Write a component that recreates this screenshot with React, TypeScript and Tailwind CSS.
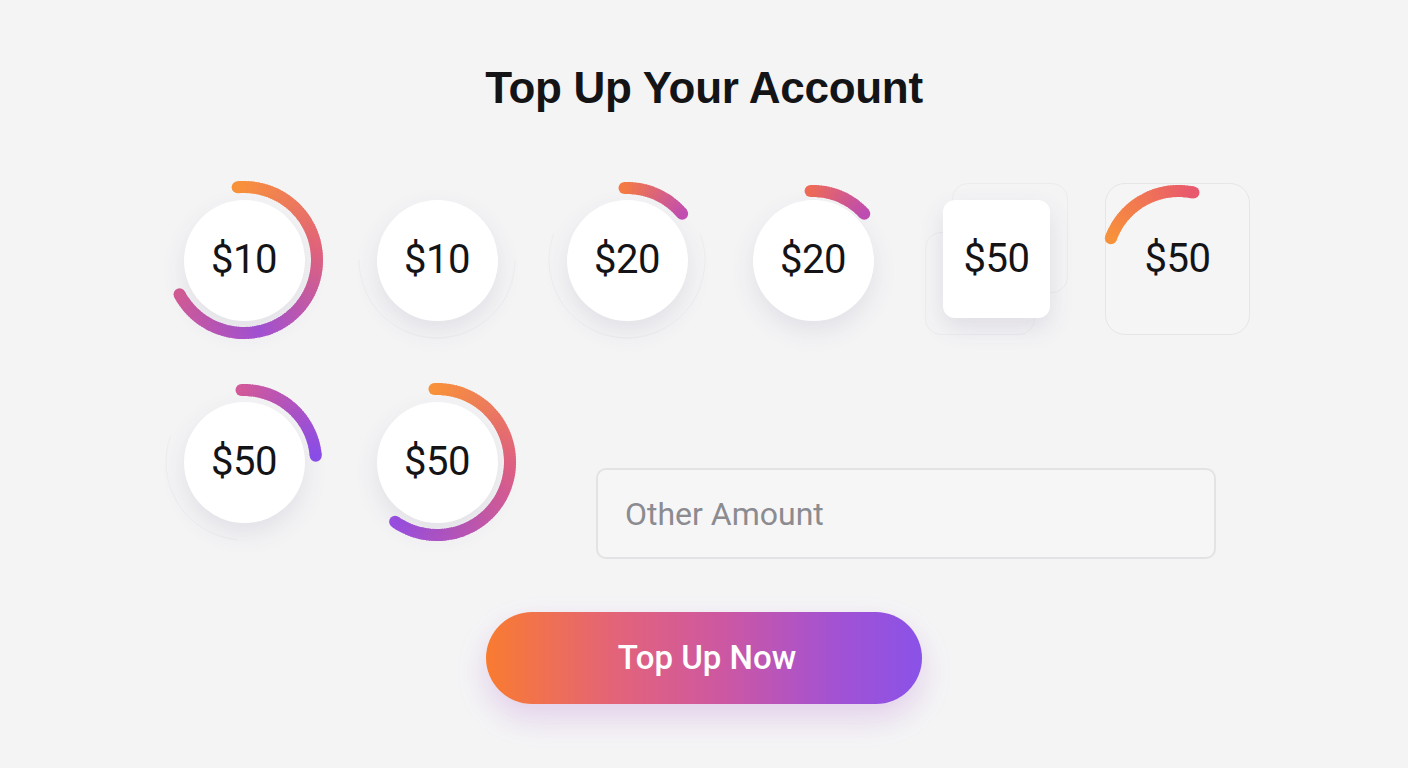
import React from "react";

type Stop = [number, string];

function hexToRgb(h: string): [number, number, number] {
  const v = h.replace("#", "");
  return [parseInt(v.slice(0, 2), 16), parseInt(v.slice(2, 4), 16), parseInt(v.slice(4, 6), 16)];
}

function colorAt(stops: Stop[], t: number): string {
  if (t <= stops[0][0]) return stops[0][1];
  for (let i = 0; i < stops.length - 1; i++) {
    const [t0, c0] = stops[i];
    const [t1, c1] = stops[i + 1];
    if (t >= t0 && t <= t1) {
      const k = (t - t0) / (t1 - t0 || 1);
      const a = hexToRgb(c0);
      const b = hexToRgb(c1);
      const m = a.map((x, j) => Math.round(x + (b[j] - x) * k));
      return `rgb(${m[0]},${m[1]},${m[2]})`;
    }
  }
  return stops[stops.length - 1][1];
}

function pt(cx: number, cy: number, r: number, a: number) {
  const rad = (a * Math.PI) / 180;
  return [cx + r * Math.cos(rad), cy + r * Math.sin(rad)];
}

function GradArc({
  cx = 80,
  cy = 80,
  r = 72,
  start,
  end,
  stops,
  width = 12,
}: {
  cx?: number;
  cy?: number;
  r?: number;
  start: number;
  end: number;
  stops: Stop[];
  width?: number;
}) {
  const n = Math.max(4, Math.ceil((end - start) / 2));
  const segs = [];
  for (let i = 0; i < n; i++) {
    const a0 = start + ((end - start) * i) / n;
    const a1 = Math.min(end, start + ((end - start) * (i + 1)) / n + 0.8);
    const [x0, y0] = pt(cx, cy, r, a0);
    const [x1, y1] = pt(cx, cy, r, a1);
    segs.push(
      <path
        key={i}
        d={`M ${x0} ${y0} A ${r} ${r} 0 0 1 ${x1} ${y1}`}
        stroke={colorAt(stops, (i + 0.5) / n)}
        strokeWidth={width}
        fill="none"
        strokeLinecap="butt"
      />
    );
  }
  const [sx, sy] = pt(cx, cy, r, start);
  const [ex, ey] = pt(cx, cy, r, end);
  return (
    <g>
      <circle cx={sx} cy={sy} r={width / 2} fill={colorAt(stops, 0)} />
      <circle cx={ex} cy={ey} r={width / 2} fill={colorAt(stops, 1)} />
      {segs}
    </g>
  );
}

function FaintArc({ start, end, r = 78 }: { start: number; end: number; r?: number }) {
  const [x0, y0] = pt(80, 80, r, start);
  const [x1, y1] = pt(80, 80, r, end);
  const large = end - start > 180 ? 1 : 0;
  return (
    <path
      d={`M ${x0} ${y0} A ${r} ${r} 0 ${large} 1 ${x1} ${y1}`}
      stroke="#ededf0"
      strokeWidth={1}
      fill="none"
    />
  );
}

function CircleItem({
  label,
  children,
  className = "",
}: {
  label: string;
  children?: React.ReactNode;
  className?: string;
}) {
  return (
    <div className={`relative w-[160px] h-[160px] shrink-0 flex items-center justify-center ${className}`}>
      <svg className="absolute inset-0 overflow-visible" width={160} height={160} viewBox="0 0 160 160">
        {children}
      </svg>
      <div className="relative w-[121px] h-[121px] rounded-full bg-white shadow-[0_10px_24px_rgba(70,60,110,0.10)] flex items-center justify-center">
        <span className="text-[40px] leading-none text-[#141416] font-['Roboto',sans-serif] tracking-[-0.5px]">
          {label}
        </span>
      </div>
    </div>
  );
}

export default function App() {
  return (
    <div className="w-[1408px] h-[768px] bg-[#f4f4f5] overflow-hidden font-['Roboto',sans-serif]">
      <h1 className="pt-[63px] text-center text-[44px] leading-[50px] font-bold text-[#141416] font-['Liberation_Sans',Arial,sans-serif] tracking-[-0.3px]">
        Top Up Your Account
      </h1>

      <div className="mt-[67px] pl-[164px] flex items-start">
        <CircleItem label="$10">
          <GradArc
            start={-95}
            end={152}
            r={73}
            stops={[
              [0, "#f8923a"],
              [0.35, "#e2647c"],
              [0.7, "#a552d6"],
              [1, "#d35c95"],
            ]}
          />
        </CircleItem>
        <CircleItem label="$10" className="ml-[33px]">
          <FaintArc start={0} end={180} />
        </CircleItem>
        <CircleItem label="$20" className="ml-[30px]">
          <FaintArc start={-20} end={200} />
          <GradArc
            start={-92}
            end={-40}
            stops={[
              [0, "#f47a44"],
              [1, "#c24fb1"],
            ]}
          />
        </CircleItem>
        <CircleItem label="$20" className="ml-[26px]">
          <GradArc
            start={-92}
            end={-42}
            r={69}
            stops={[
              [0, "#ee6b58"],
              [1, "#bf4db3"],
            ]}
          />
        </CircleItem>

        <div className="relative w-[160px] h-[160px] shrink-0 ml-[23px]">
          <div className="absolute left-[36px] top-[3px] w-[116px] h-[110px] rounded-[16px] border border-[#ececef]" />
          <div className="absolute left-[9px] top-[52px] w-[110px] h-[103px] rounded-[16px] border border-[#ececef]" />
          <div className="absolute left-[27px] top-[20px] w-[107px] h-[118px] rounded-[12px] bg-white shadow-[0_10px_24px_rgba(70,60,110,0.12)] flex items-center justify-center">
            <span className="text-[40px] leading-none text-[#141416] tracking-[-0.5px]">$50</span>
          </div>
        </div>

        <div className="relative w-[145px] h-[152px] shrink-0 ml-[29px] mt-[3px] rounded-[20px] border border-[#e6e6e9] bg-[#f5f5f6] flex items-center justify-center">
          <svg className="absolute left-0 top-0 overflow-visible" width={145} height={152} viewBox="0 0 145 152">
            <GradArc
              cx={72.5}
              cy={79}
              r={72}
              start={-160}
              end={-78}
              stops={[
                [0, "#f8923a"],
                [1, "#e8586f"],
              ]}
            />
          </svg>
          <span className="relative text-[40px] leading-none text-[#141416] tracking-[-0.5px]">$50</span>
        </div>
      </div>

      <div className="mt-[42px] pl-[164px] flex items-start">
        <CircleItem label="$50">
          <FaintArc start={95} end={200} />
          <GradArc
            start={-92}
            end={-5}
            stops={[
              [0, "#d2599a"],
              [1, "#8b4ee9"],
            ]}
          />
        </CircleItem>
        <CircleItem label="$50" className="ml-[33px]">
          <GradArc
            start={-92}
            end={125}
            r={73}
            stops={[
              [0, "#f8923a"],
              [0.45, "#df5f86"],
              [1, "#9a4fe2"],
            ]}
          />
        </CircleItem>

        <div className="ml-[79px] mt-[86px] w-[620px] h-[91px] rounded-[10px] border-2 border-[#e3e3e6] bg-[#f6f6f7] flex items-center px-[27px]">
          <span className="text-[32px] text-[#8b8b90] font-normal">Other Amount</span>
        </div>
      </div>

      <div className="mt-[53px] flex justify-center">
        <button className="w-[436px] h-[92px] rounded-full bg-[linear-gradient(90deg,#f97b30_0%,#e3637a_30%,#cc57a3_55%,#a352d3_80%,#8a52e8_100%)] shadow-[0_14px_30px_rgba(170,80,200,0.22)] flex items-center justify-center pl-[6px]">
          <span className="text-white text-[33px] font-medium">Top Up Now</span>
        </button>
      </div>
    </div>
  );
}
